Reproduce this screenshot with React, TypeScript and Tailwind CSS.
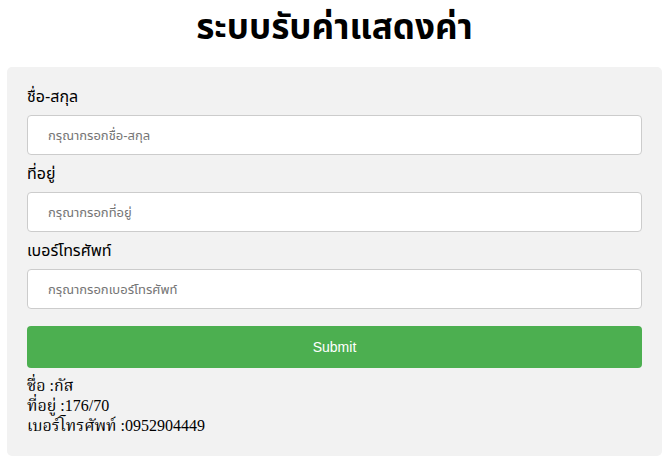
import { useState } from "react";

export default function App() {
  const [name, setName] = useState("");
  const [address, setAddress] = useState("");
  const [phone, setPhone] = useState("");

  // ค่าที่แสดงด้านล่าง
  const result = { name: "กัส", address: "176/70", phone: "0952904449" };

  return (
    <div className="w-full bg-white font-['Liberation_Sans','Noto_Sans_Thai',sans-serif]">
      <h1 className="mt-[8px] mb-[22px] text-center text-[35px] leading-[37px] font-bold text-black">
        ระบบรับค่าแสดงค่า
      </h1>

      <div className="mx-[7px] rounded-[5px] bg-[#f2f2f2] p-[20px]">
        <label className="block text-[16px] leading-[20px] text-black">ชื่อ-สกุล</label>
        <input
          value={name}
          onChange={(e) => setName(e.target.value)}
          placeholder="กรุณากรอกชื่อ-สกุล"
          className="my-[8px] block h-[40px] w-full rounded-[4px] border border-[#ccc] bg-white px-[20px] text-[13px] placeholder:text-[#757575] outline-none"
        />

        <label className="block text-[16px] leading-[21px] text-black">ที่อยู่</label>
        <input
          value={address}
          onChange={(e) => setAddress(e.target.value)}
          placeholder="กรุณากรอกที่อยู่"
          className="my-[8px] block h-[40px] w-full rounded-[4px] border border-[#ccc] bg-white px-[20px] text-[13px] placeholder:text-[#757575] outline-none"
        />

        <label className="block text-[16px] leading-[21px] text-black">เบอร์โทรศัพท์</label>
        <input
          value={phone}
          onChange={(e) => setPhone(e.target.value)}
          placeholder="กรุณากรอกเบอร์โทรศัพท์"
          className="my-[8px] block h-[40px] w-full rounded-[4px] border border-[#ccc] bg-white px-[20px] text-[13px] placeholder:text-[#757575] outline-none"
        />

        <button className="mt-[17px] mb-[8px] block h-[42px] w-full rounded-[4px] bg-[#4caf50] text-[14px] text-white">
          Submit
        </button>

        {/* ผลลัพธ์ */}
        <div className="font-['Liberation_Serif','Noto_Serif_Thai',serif] text-[16px] leading-[20px] text-black">
          <div>ชื่อ :{result.name}</div>
          <div>ที่อยู่ :{result.address}</div>
          <div>เบอร์โทรศัพท์ :{result.phone}</div>
        </div>
      </div>
    </div>
  );
}
